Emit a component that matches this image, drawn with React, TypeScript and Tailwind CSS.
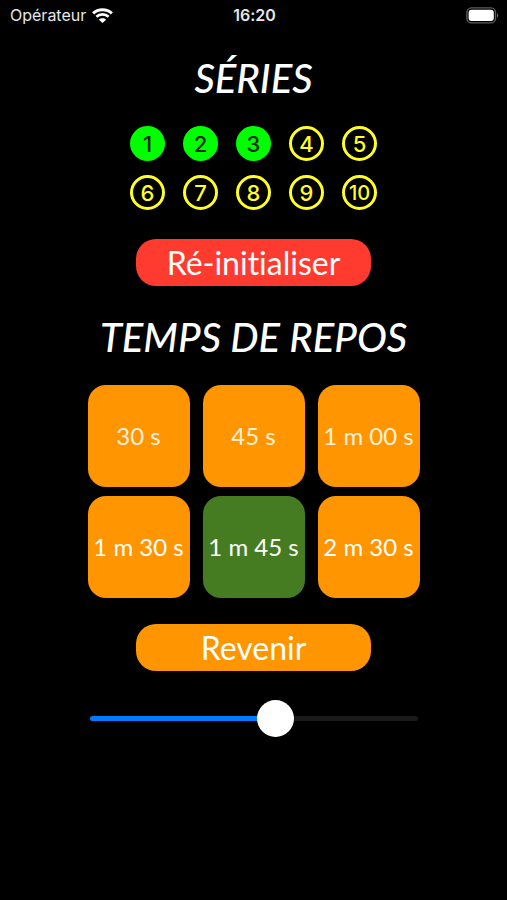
import { useState } from "react";

const sets = [1, 2, 3, 4, 5, 6, 7, 8, 9, 10];

const rests = [
  { label: "30 s", tone: "text-[#fff0dc]" },
  { label: "45 s", tone: "text-[#fff0dc]" },
  { label: "1 m 00 s", tone: "text-[#fff0dc]" },
  { label: "1 m 30 s", tone: "text-white" },
  { label: "1 m 45 s", tone: "text-white" },
  { label: "2 m 30 s", tone: "text-white" },
];

function StatusBar() {
  return (
    <header className="grid h-[30px] w-full grid-cols-3 items-center pr-2 pl-[10px] font-['Inter',sans-serif] text-base text-[#e6e6e6]">
      <div className="flex items-center gap-[6px]">
        <span>Opérateur</span>
        <svg width="21" height="15" viewBox="0 0 21 15" fill="none" aria-label="Wi-Fi">
          <path d="M1.1 5.3C6.3.4 14.7.4 19.9 5.3" stroke="white" strokeWidth="3" />
          <path d="M4.4 8.7C7.8 5.5 13.2 5.5 16.6 8.7" stroke="white" strokeWidth="2.7" />
          <path d="M10.5 15 6.9 11.7C8.9 9.8 12.1 9.8 14.1 11.7Z" fill="white" />
        </svg>
      </div>
      <time className="text-center font-semibold">16:20</time>
      <svg className="justify-self-end" width="33" height="17" viewBox="0 0 33 17" fill="none" aria-label="Batterie">
        <rect x="0.9" y="0.9" width="28.6" height="15" rx="4.5" stroke="#5c5c5c" strokeWidth="1.4" />
        <rect x="2.6" y="2.8" width="25.2" height="11.2" rx="3" fill="white" />
        <path d="M31 6.2c1.7.7 1.7 3.7 0 4.4Z" fill="#666" />
      </svg>
    </header>
  );
}

export default function App() {
  const [done, setDone] = useState(3);
  const [selected, setSelected] = useState("1 m 45 s");
  const [level, setLevel] = useState(574);
  const ratio = level / 1000;

  return (
    <div className="flex min-h-screen w-full flex-col items-center bg-black font-['Lato',sans-serif] text-white [font-variant-ligatures:none]">
      <StatusBar />
      <main className="flex w-full flex-col items-center px-4 pt-6">
        <h1 className="text-[40px] leading-12 font-medium italic">SÉRIES</h1>

        <div className="mt-6 grid grid-cols-5 gap-x-[18px] gap-y-[14px] font-['Inter',sans-serif]">
          {sets.map((n) => (
            <button
              key={n}
              type="button"
              aria-pressed={n <= done}
              onClick={() => setDone(n)}
              className={`flex size-[35px] items-center justify-center rounded-full leading-none font-medium ${
                n <= done ? "bg-[#00ff00] text-[#062806]" : "border-3 border-[#ffff26] text-[#ffff26]"
              } ${n === 10 ? "text-[20px]" : "text-[22px]"}`}
            >
              {n}
            </button>
          ))}
        </div>

        <button
          type="button"
          onClick={() => setDone(0)}
          className="mt-[29px] h-[47px] w-[235px] rounded-[20px] bg-[#ff3b30] text-[32px] leading-none"
        >
          Ré-initialiser
        </button>

        <h2 className="mt-[27px] text-[40px] leading-12 font-medium italic">TEMPS DE REPOS</h2>

        <div className="mt-6 grid grid-cols-3 gap-x-[13px] gap-y-[9px]">
          {rests.map(({ label, tone }) => (
            <button
              key={label}
              type="button"
              aria-pressed={label === selected}
              onClick={() => setSelected(label)}
              className={`size-[102px] rounded-[18px] text-2xl whitespace-nowrap ${tone} ${
                label === selected ? "bg-[#457c22]" : "bg-[#ff9500]"
              }`}
            >
              {label}
            </button>
          ))}
        </div>

        <button type="button" className="mt-[26px] h-[47px] w-[235px] rounded-[20px] bg-[#ff9500] text-[32px] leading-none">
          Revenir
        </button>

        <input
          type="range"
          min={0}
          max={1000}
          value={level}
          aria-label="Temps de repos"
          onChange={(e) => setLevel(Number(e.target.value))}
          style={{
            backgroundImage: `linear-gradient(to right, #007aff ${(ratio * 291 + 18) / 3.28}%, #1a1a1a 0)`,
          }}
          className="mt-[45px] h-[5px] w-[328px] appearance-none rounded-full [&::-webkit-slider-thumb]:size-[37px] [&::-webkit-slider-thumb]:appearance-none [&::-webkit-slider-thumb]:rounded-full [&::-webkit-slider-thumb]:bg-white"
        />
      </main>
    </div>
  );
}
